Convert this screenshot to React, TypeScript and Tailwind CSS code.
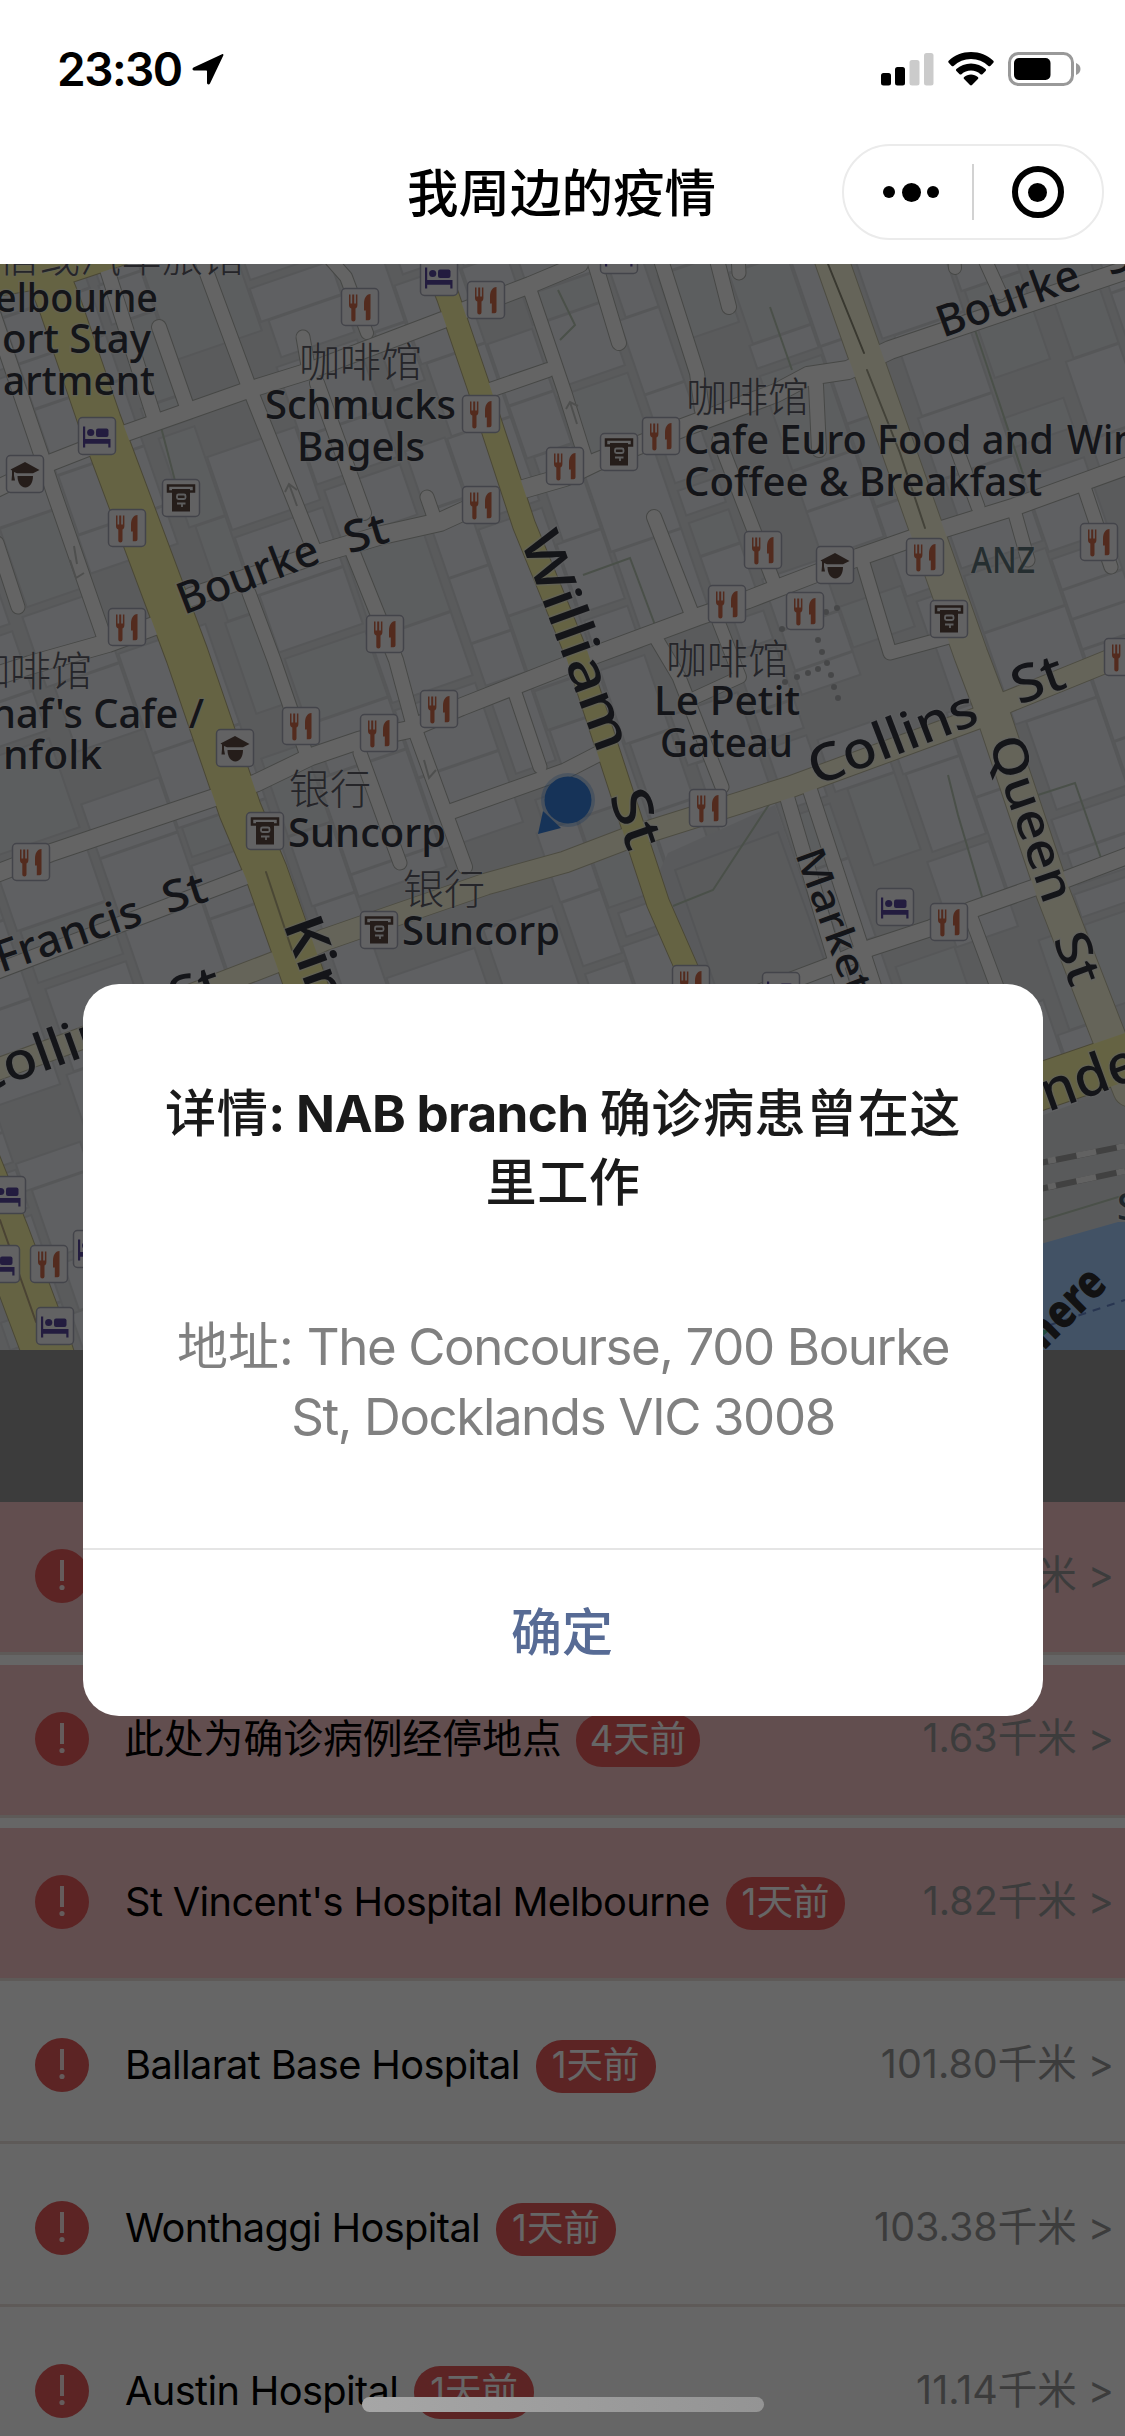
import React from "react";

type Pt = [number, number];
type Poi = { kind: "food" | "bed" | "grad" | "atm"; x: number; y: number };
type Label = {
  t: string;
  x: number;
  y: number;
  size: number;
  len?: number;
  rot?: number;
  fill?: string;
  weight?: number;
};

const lanes: { w: number; pts: Pt[] }[] = [
  { w: 16, pts: [[-10, 492], [52, 462], [126, 433], [248, 390], [306, 372], [443, 320]] },
  { w: 16, pts: [[462, 311], [530, 285], [580, 264]] },
  { w: 14, pts: [[490, 390], [548, 370]] },
  { w: 18, pts: [[191, 597], [321, 553], [382, 535], [440, 522], [475, 506]] },
  { w: 18, pts: [[520, 490], [565, 477], [596, 462], [682, 428], [776, 393], [808, 376], [848, 370], [890, 350], [1135, 267]] },
  { w: 18, pts: [[165, 622], [108, 643], [30, 665], [-10, 678]] },
  { w: 17, pts: [[-5, 874], [50, 853], [216, 797], [256, 783], [310, 757], [360, 740], [407, 730], [461, 707], [565, 666], [697, 617], [747, 600], [812, 575], [859, 557], [925, 534]] },
  { w: 17, pts: [[940, 530], [1014, 507], [1130, 465]] },
  { w: 15, pts: [[447, 813], [565, 771], [600, 753]] },
  { w: 16, pts: [[740, 1000], [827, 967], [870, 948], [931, 928], [971, 910], [1036, 887], [1064, 880], [1135, 853]] },
  { w: 15, pts: [[-5, 972], [245, 877]] },
  { w: 14, pts: [[-8, 310], [43, 460], [54, 493], [104, 637]] },
  { w: 14, pts: [[104, 260], [155, 420]] },
  { w: 14, pts: [[159, 327], [187, 407]] },
  { w: 14, pts: [[202, 260], [249, 387], [313, 547]] },
  { w: 13, pts: [[249, 593], [274, 660], [306, 753]] },
  { w: 12, pts: [[331, 260], [346, 277], [367, 333]] },
  { w: 13, pts: [[303, 337], [308, 366]] },
  { w: 14, pts: [[317, 383], [364, 513]] },
  { w: 14, pts: [[353, 553], [396, 660], [414, 727], [465, 867]] },
  { w: 13, pts: [[427, 497], [434, 517]] },
  { w: 13, pts: [[360, 753], [400, 863]] },
  { w: 13, pts: [[515, 693], [540, 767]] },
  { w: 13, pts: [[-3, 543], [18, 607]] },
  { w: 13, pts: [[530, 290], [565, 393], [586, 460]] },
  { w: 14, pts: [[594, 260], [619, 343]] },
  { w: 14, pts: [[661, 260], [697, 373], [702, 410]] },
  { w: 14, pts: [[717, 260], [729, 307]] },
  { w: 13, pts: [[738, 255], [739, 273]] },
  { w: 13, pts: [[719, 440], [773, 580]] },
  { w: 14, pts: [[654, 517], [693, 617]] },
  { w: 13, pts: [[863, 563], [890, 653], [949, 637]] },
  { w: 13, pts: [[956, 447], [978, 507]] },
  { w: 13, pts: [[985, 260], [1000, 293]] },
  { w: 12, pts: [[954, 255], [955, 268]] },
  { w: 13, pts: [[1014, 510], [1028, 560]] },
  { w: 13, pts: [[1084, 487], [1111, 567]] },
  { w: 14, pts: [[816, 385], [819, 450]] },
  { w: 13, pts: [[657, 640], [679, 677], [722, 787]] },
  { w: 12, pts: [[716, 615], [740, 677], [690, 700]] },
  { w: 14, pts: [[787, 797], [841, 980], [860, 1040]] },
  { w: 14, pts: [[810, 790], [873, 983], [890, 1040]] },
  { w: 13, pts: [[971, 917], [1000, 995]] },
];

const paleRoads: { w: number; pts: Pt[] }[] = [
  { w: 33, pts: [[828, 250], [833, 264], [926, 528], [971, 655], [990, 705], [1053, 893], [1110, 1040], [1130, 1090]] },
  { w: 21, pts: [[-10, 1072], [83, 1038], [216, 985], [281, 960], [324, 940], [396, 915], [486, 884], [565, 862], [628, 838], [790, 787], [978, 718], [1007, 702], [1135, 650]] },
];

const yellowRoads: { w: number; pts: Pt[] }[] = [
  { w: 38, pts: [[-10, 278], [60, 266], [120, 246]] },
  { w: 42, pts: [[38, 250], [60, 305], [100, 422], [187, 655], [240, 810], [266, 872], [304, 980], [325, 1040]] },
  { w: 22, pts: [[425, 240], [448, 297], [479, 388], [524, 525], [577, 655], [634, 830], [658, 903], [686, 967], [700, 1000]] },
  { w: 50, pts: [[-30, 1150], [4, 1235], [47, 1350], [55, 1375]] },
  { w: 46, pts: [[1030, 1090], [1135, 1054]] },
];

const pois: Poi[] = [
  { kind: "food", x: 360, y: 307 }, { kind: "food", x: 486, y: 300 }, { kind: "food", x: 481, y: 414 },
  { kind: "food", x: 565, y: 466 }, { kind: "food", x: 481, y: 505 }, { kind: "food", x: 127, y: 528 },
  { kind: "food", x: 127, y: 627 }, { kind: "food", x: 385, y: 634 }, { kind: "bed", x: 439, y: 277 },
  { kind: "bed", x: 97, y: 436 }, { kind: "grad", x: 25, y: 474 }, { kind: "atm", x: 181, y: 498 },
  { kind: "bed", x: 619, y: 255 }, { kind: "food", x: 661, y: 436 }, { kind: "atm", x: 619, y: 452 },
  { kind: "food", x: 763, y: 550 }, { kind: "grad", x: 835, y: 565 }, { kind: "food", x: 925, y: 557 },
  { kind: "food", x: 1099, y: 542 }, { kind: "food", x: 727, y: 604 }, { kind: "food", x: 805, y: 611 },
  { kind: "atm", x: 949, y: 619 }, { kind: "food", x: 1123, y: 657 }, { kind: "food", x: 301, y: 726 },
  { kind: "food", x: 379, y: 733 }, { kind: "food", x: 439, y: 709 }, { kind: "grad", x: 235, y: 748 },
  { kind: "atm", x: 265, y: 831 }, { kind: "food", x: 31, y: 862 }, { kind: "atm", x: 379, y: 930 },
  { kind: "food", x: 708, y: 808 }, { kind: "bed", x: 895, y: 907 }, { kind: "food", x: 949, y: 922 },
  { kind: "food", x: 691, y: 984 }, { kind: "bed", x: 781, y: 991 }, { kind: "bed", x: 7, y: 1195 },
  { kind: "bed", x: 1, y: 1264 }, { kind: "food", x: 49, y: 1264 }, { kind: "bed", x: 92, y: 1249 },
  { kind: "bed", x: 55, y: 1326 },
];

const cjk: Label[] = [
  { t: "宿或汽车旅馆", x: -2, y: 272, size: 41 },
  { t: "咖啡馆", x: 299, y: 377, size: 41 },
  { t: "咖啡馆", x: 686, y: 412, size: 41 },
  { t: "咖啡馆", x: 666, y: 674, size: 41 },
  { t: "咖啡馆", x: -31, y: 686, size: 41 },
  { t: "银行", x: 289, y: 804, size: 41 },
  { t: "银行", x: 403, y: 904, size: 41 },
];

const labels: Label[] = [
  { t: "elbourne", x: -5, y: 312, size: 39.5, len: 163 },
  { t: "ort Stay", x: 2, y: 353, size: 39.5, len: 149 },
  { t: "artment", x: 3, y: 395, size: 39.5, len: 152 },
  { t: "Schmucks", x: 265, y: 419, size: 39.5, len: 191 },
  { t: "Bagels", x: 297, y: 461, size: 39.5, len: 128 },
  { t: "Cafe Euro Food and", x: 684, y: 454, size: 39.5, len: 370 },
  { t: "Wine", x: 1067, y: 454, size: 39.5, len: 92 },
  { t: "Coffee & Breakfast", x: 684, y: 496, size: 39.5, len: 358 },
  { t: "ANZ", x: 971, y: 573, size: 36, len: 64, fill: "#5c7378" },
  { t: "Le Petit", x: 654, y: 715, size: 39.5, len: 146 },
  { t: "Gateau", x: 660, y: 757, size: 39.5, len: 133 },
  { t: "haf's Cafe /", x: -9, y: 728, size: 39.5, len: 213 },
  { t: "nfolk", x: 3, y: 769, size: 39.5, len: 99 },
  { t: "Suncorp", x: 288, y: 847, size: 39.5, len: 158 },
  { t: "Suncorp", x: 402, y: 945, size: 39.5, len: 158 },
  { t: "Bourke", x: 184, y: 615, size: 44, len: 148, rot: -21 },
  { t: "St", x: 349, y: 554, size: 44, len: 44, rot: -17 },
  { t: "Bourke", x: 943, y: 338, size: 44, len: 149, rot: -20 },
  { t: "St", x: 1110, y: 276, size: 44, len: 44, rot: -20 },
  { t: "William", x: 520, y: 539, size: 54, len: 230, rot: 70 },
  { t: "St", x: 609, y: 796, size: 54, len: 60, rot: 71 },
  { t: "Collins", x: 816, y: 786, size: 52, len: 177, rot: -21 },
  { t: "St", x: 1019, y: 705, size: 52, len: 53, rot: -20 },
  { t: "Queen", x: 988, y: 742, size: 48, len: 173, rot: 71 },
  { t: "St", x: 1053, y: 939, size: 48, len: 53, rot: 70 },
  { t: "Market", x: 795, y: 854, size: 40, len: 152, rot: 70 },
  { t: "King", x: 283, y: 924, size: 54, len: 126, rot: 70, weight: 600 },
  { t: "Francis", x: 1, y: 973, size: 44, len: 152, rot: -19 },
  { t: "St", x: 168, y: 914, size: 44, len: 44, rot: -18 },
  { t: "Collins", x: -24, y: 1096, size: 52, len: 177, rot: -20 },
  { t: "St", x: 177, y: 1016, size: 52, len: 52, rot: -20 },
  { t: "nders", x: 1048, y: 1112, size: 55, len: 152, rot: -20 },
  { t: "S", x: 1117, y: 1220, size: 38, fill: "#4a606c" },
];

const dots: Pt[] = [
  [837, 608], [826, 612], [782, 629], [818, 640], [822, 652], [827, 663], [818, 669], [808, 673],
  [797, 677], [785, 682], [831, 675], [834, 687], [838, 698],
];

const line = (pts: Pt[]) => pts.map((p) => p.join(",")).join(" ");

/* Deterministic parcels laid on the city grid, which runs about 19 degrees off the horizontal. */
function parcels() {
  const out: { x: number; y: number; w: number; h: number; tone: number }[] = [];
  let seed = 29;
  const rnd = () => {
    seed = (seed * 1103515245 + 12345) % 2147483648;
    return seed / 2147483648;
  };
  let x = -520;
  while (x < 1050) {
    const w = 44 + Math.floor(rnd() * 52);
    let y = 230 + rnd() * 30;
    while (y < 1750) {
      const h = 30 + Math.floor(rnd() * 78);
      if (rnd() > 0.14) {
        const inset = rnd() > 0.6 ? rnd() * 14 : 0;
        out.push({ x: x + inset, y, w: w - 2 - inset, h: h - (rnd() > 0.6 ? 8 : 1), tone: rnd() });
      }
      y += h;
    }
    x += w + (rnd() > 0.5 ? 7 : 0);
  }
  return out;
}

function PoiIcon({ kind, x, y }: Poi) {
  return (
    <g transform={`translate(${x - 19} ${y - 19})`}>
      <rect x="0.5" y="0.5" width="37" height="37" rx="4" fill="#f4f4f7" stroke="#a9abba" strokeWidth="1.5" />
      {kind === "food" && (
        <g fill="#d06c4c">
          <path d="M8 6.500h1.500v9h1.700v-9h2v9h1.700v-9h1.500v10.500c0 2-.7 2.800-1.900 3.400v11a1.900 1.900 0 0 1-4.200 0v-11c-1.500-.6-2.300-1.400-2.300-3.400z" />
          <path d="M29.500 6v24c0 1.500-.7 2.200-2 2.200h-2.700V22.500h-1.800v-7c0-5 2.200-9.500 6.500-9.500z" />
        </g>
      )}
      {kind === "bed" && (
        <g fill="#57489f">
          <path d="M5 9.500h2.200v12.500H32.500v8.500h-2.200v-3.800H7.200v3.800H5z" />
          <circle cx="12.700" cy="15.500" r="3.600" />
          <rect x="18" y="11.500" width="12.500" height="8.500" rx="2" />
        </g>
      )}
      {kind === "grad" && (
        <g fill="#5e4a42">
          <path d="M19 7l14.500 8-6.500 3.200H11l-3-1.200v3.500l1 5H5.500l.5-5.500v-4.500L4.500 14.500z" />
          <path d="M11.500 21h15.500c0 6.500-3 11.500-7.700 11.500s-7.800-5-7.800-11.500z" />
        </g>
      )}
      {kind === "atm" && (
        <g>
          <path d="M6 6.500h26v6H6z" fill="none" stroke="#5e4a42" strokeWidth="2.500" />
          <path d="M10 10h18v22.500H10z" fill="#5e4a42" />
          <rect x="15" y="15.500" width="8.500" height="4.500" rx="1.500" fill="none" stroke="#e8e8ea" strokeWidth="1.800" />
          <path d="M15 24.500h8.500M20 24.500v3.500" stroke="#e8e8ea" strokeWidth="1.800" />
        </g>
      )}
    </g>
  );
}

function MapText({ l, light }: { l: Label; light?: boolean }) {
  return (
    <text
      x={0}
      y={0}
      transform={`translate(${l.x} ${l.y}) rotate(${l.rot ?? 0})`}
      fontSize={l.size}
      fontWeight={l.weight ?? (light ? 300 : 460)}
      textLength={l.len}
      lengthAdjust="spacingAndGlyphs"
      fill={l.fill ?? (light ? "#5c5c66" : "#34363f")}
      stroke="#f0f2f5"
      strokeWidth={light ? 1.5 : 2.5}
      strokeOpacity={0.5}
      paintOrder="stroke"
    >
      {l.t}
    </text>
  );
}

function CityMap() {
  return (
    <svg viewBox="0 264 1125 1086" className="block h-[1086px] w-full shrink-0 font-['Noto_Sans','Noto_Sans_CJK_SC',sans-serif]">
      <rect x="0" y="264" width="1125" height="1086" fill="#e0e3e6" />
      <g transform="rotate(-19)">
        {parcels().map((p, i) => (
          <rect
            key={i}
            x={p.x}
            y={p.y}
            width={p.w}
            height={p.h}
            fill={p.tone > 0.25 ? "#edeff4" : "#e7eaed"}
            stroke="#d6d9dd"
            strokeWidth="2"
          />
        ))}
      </g>
      <polygon points="668,853 775,805 832,965 712,1000 655,880" fill="#dfe2e5" />
      <polygon points="675,870 778,832 826,965 720,1000" fill="#e0e3e5" stroke="#d2d5d9" strokeWidth="2" />
      <polygon points="1030,1120 1125,1085 1125,1225 1030,1250" fill="#dfe2e3" />
      <g fill="none" stroke="#b9c8b6" strokeWidth="2">
        <polyline points="770,803 713,890 673,906" />
        <polyline points="558,290 575,325 560,340" />
        <polyline points="770,307 792,370" />
        <polyline points="975,330 1025,480" />
        <polyline points="948,775 958,815 983,900" />
        <polyline points="1038,795 1075,783 1101,858" />
        <polyline points="583,575 630,558 655,625" />
        <polyline points="161,427 180,500" />
        <polyline points="1043,1220 1125,1195" />
      </g>
      <g fill="none" strokeLinejoin="round" strokeLinecap="round">
        {lanes.map((r, i) => (
          <polyline key={i} points={line(r.pts)} stroke="#b0b3ae" strokeWidth={r.w + 2} />
        ))}
        {paleRoads.map((r, i) => (
          <polyline key={i} points={line(r.pts)} stroke="#c0bea5" strokeWidth={r.w + 2} />
        ))}
        {yellowRoads.map((r, i) => (
          <polyline key={i} points={line(r.pts)} stroke="#b9b285" strokeWidth={r.w + 2} />
        ))}
        {lanes.map((r, i) => (
          <polyline key={i} points={line(r.pts)} stroke="#fafafa" strokeWidth={r.w} />
        ))}
        {paleRoads.map((r, i) => (
          <polyline key={i} points={line(r.pts)} stroke="#fdfbdf" strokeWidth={r.w} />
        ))}
        {yellowRoads.map((r, i) => (
          <polyline key={i} points={line(r.pts)} stroke="#fdf8a8" strokeWidth={r.w} />
        ))}
        <polyline points="828,264 864,353" stroke="#8f8d78" strokeWidth="2" />
        <polyline points="867,370 900,453 925,528" stroke="#a8a68f" strokeWidth="2" />
        <polyline points="266,872 292,950" stroke="#b9b285" strokeWidth="2" />
        <polyline points="0,1220 36,1322" stroke="#b9a880" strokeWidth="2" />
      </g>
      <g fill="none" stroke="#c4c6c4" strokeWidth="2">
        <path d="M285 492l4-8 8 6M289 484l8 22M70 560l6 18 8-5M74 546l3 18M566 409l4-7 8 4M570 402l7 22M424 760l5 18 7-8" />
      </g>
      <g fill="none" strokeWidth="6">
        <path d="M1040 1163 1125 1146M1040 1189 1125 1171" stroke="#a2a2a2" />
        <path d="M1048 1161 1125 1146M1048 1187 1125 1171" stroke="#f5f5f5" strokeDasharray="20 21" strokeDashoffset="12" />
      </g>
      <polygon points="1030,1247 1118,1222 1125,1222 1125,1350 1030,1350" fill="#a5cdfd" />
      <path d="M1050 1325 1125 1300" stroke="#6485c8" strokeWidth="2" strokeDasharray="8 7" />
      <path d="M1043 1330h7l-7 6z" fill="#4fb79b" />
      {dots.map(([x, y], i) => (
        <circle key={i} cx={x} cy={y} r="3" fill="#b0b2b5" />
      ))}
      {pois.map((p, i) => (
        <PoiIcon key={i} {...p} />
      ))}
      {cjk.map((l, i) => (
        <MapText key={i} l={l} light />
      ))}
      {labels.map((l, i) => (
        <MapText key={i} l={l} />
      ))}
      <text transform="translate(1044 1351) rotate(-45)" fontSize="47" fontWeight="900" textLength="92" lengthAdjust="spacingAndGlyphs" fill="#2e2e30">
        here
      </text>
      <circle cx="568" cy="800" r="27" fill="#3d86dd" opacity="0.3" />
      <path d="M538 834 543 811 561 828z" fill="#3880dc" />
      <circle cx="568" cy="800" r="23.500" fill="#3880dc" />
    </svg>
  );
}

function StatusBar() {
  return (
    <div className="flex h-[132px] items-start justify-between pt-[43px] pr-[43px] pl-[57px]">
      <div className="flex items-center gap-[10px]">
        <span className="text-[46px] leading-[52px] font-semibold tracking-[-1.5px] text-black">23:30</span>
        <svg viewBox="0 0 32 32" className="h-[32px] w-[32px]">
          <path d="M30 1.200 1.500 14.600c-1.600.8-1.200 2.900.5 2.900h12.300c.5 0 .7.2.7.7v11.600c0 1.900 2.200 2.200 3 .6L31.300 2.600C31.800 1.400 31 .7 30 1.200z" />
        </svg>
      </div>
      <div className="mt-[9px] flex items-start gap-[14px]">
        <svg viewBox="0 0 53 34" className="h-[34px] w-[53px]">
          <rect x="0" y="21" width="10" height="12.500" rx="2.500" />
          <rect x="14" y="15" width="10" height="18.500" rx="2.500" />
          <rect x="28.500" y="8" width="10" height="25.500" rx="2.500" fill="#cbcbcb" />
          <rect x="43" y="1" width="9.500" height="32.500" rx="2.500" fill="#cbcbcb" />
        </svg>
        <svg viewBox="0 0 46 34" className="h-[34px] w-[46px]">
          <path d="M23 0C14.300 0 6.500 3.300.7 8.800c-.6.6-.6 1.400 0 2l3 3.100c.5.500 1.300.500 1.900 0A25 25 0 0 1 23 6.900a25 25 0 0 1 17.400 7c.6.500 1.400.500 1.900 0l3-3.100c.6-.6.600-1.400 0-2C39.500 3.300 31.700 0 23 0z" />
          <path d="M23 11.400c-5.600 0-10.700 2.100-14.600 5.600-.6.6-.6 1.400 0 2l3.200 3.200c.5.500 1.300.5 1.900 0a14 14 0 0 1 19 0c.6.500 1.400.5 1.900 0l3.200-3.200c.6-.6.6-1.400 0-2-3.900-3.500-9-5.600-14.600-5.600z" />
          <path d="M23 22.500c-2.600 0-5 1-6.800 2.500-.7.600-.7 1.400-.1 2l5.900 6c.6.600 1.400.6 2 0l5.900-6c.6-.6.6-1.400-.1-2-1.800-1.500-4.200-2.500-6.800-2.500z" />
        </svg>
        <svg viewBox="0 0 74 34" className="h-[34px] w-[74px]">
          <rect x="1.500" y="1.500" width="63" height="31" rx="9" fill="none" stroke="#999" strokeWidth="3" />
          <rect x="6" y="6" width="36.500" height="22" rx="5" />
          <path d="M68 11c2.700 1 4.500 3.200 4.500 6s-1.800 5-4.500 6z" fill="#999" />
        </svg>
      </div>
    </div>
  );
}

function NavBar() {
  return (
    <div className="relative flex h-[132px] items-start justify-center">
      <h1 className="pt-[25px] pr-[2px] text-[51.500px] leading-[72px] font-medium text-black">我周边的疫情</h1>
      <div className="absolute top-[12px] right-[21px] flex h-[96px] w-[262px] items-center rounded-full border-2 border-[#ebebeb]">
        <div className="flex w-[128px] items-center justify-center gap-[6.500px] pl-[6px]">
          <span className="size-[12px] rounded-full bg-black" />
          <span className="size-[19px] rounded-full bg-black" />
          <span className="size-[12px] rounded-full bg-black" />
        </div>
        <span className="h-[56px] w-[1.500px] bg-[#d2d2d2]" />
        <div className="flex flex-1 items-center justify-center">
          <span className="flex size-[52px] items-center justify-center rounded-full border-[6.500px] border-black">
            <span className="size-[19px] rounded-full bg-black" />
          </span>
        </div>
      </div>
    </div>
  );
}

const rows = [
  { name: "此处为确诊病例经停地点", ago: "4天前", dist: "1.20千米", near: true, latin: false },
  { name: "此处为确诊病例经停地点", ago: "4天前", dist: "1.63千米", near: true, latin: false },
  { name: "St Vincent's Hospital Melbourne", ago: "1天前", dist: "1.82千米", near: true, latin: true },
  { name: "Ballarat Base Hospital", ago: "1天前", dist: "101.80千米", near: false, latin: true },
  { name: "Wonthaggi Hospital", ago: "1天前", dist: "103.38千米", near: false, latin: true },
  { name: "Austin Hospital", ago: "1天前", dist: "11.14千米", near: false, latin: true },
];

function CaseRow({ name, ago, dist, near, latin }: (typeof rows)[number]) {
  return (
    <li
      className={`mb-[10px] flex h-[153px] shrink-0 items-center border-b-[3px] border-[#ebe2dc] pr-[11px] pb-[2px] pl-[35px] ${
        near ? "bg-[#f5c3c6]" : "bg-white"
      }`}
    >
      <svg viewBox="0 0 54 54" className="size-[54px]">
        <circle cx="27" cy="27" r="27" fill="#e65a5a" />
        <rect x="25" y="11" width="4" height="21" fill="#fff" fillOpacity="0.85" />
        <circle cx="27" cy="38.5" r="2.6" fill="#fff" fillOpacity="0.85" />
      </svg>
      <span
        className={`text-[39.800px] leading-[56px] whitespace-nowrap text-black ${
          latin ? "mr-[16px] ml-[36px] tracking-[-0.65px]" : "mr-[14px] ml-[35px]"
        }`}
      >
        {name}
      </span>
      <span
        className={`mt-[2px] flex h-[53px] items-center rounded-[26px] bg-[#e65a5a] pb-[2px] text-[36.500px] whitespace-nowrap text-white ${
          latin ? "px-[16px]" : "px-[14px]"
        }`}
      >
        {ago}
      </span>
      <span className="ml-auto text-[39.500px] whitespace-nowrap text-[#979797]">{dist} &gt;</span>
    </li>
  );
}

function Dialog() {
  return (
    <div className="absolute top-[984px] left-[83px] flex h-[732px] w-[960px] flex-col overflow-hidden rounded-[36px] bg-white text-center">
      <h2 className="px-[60px] pt-[95px] text-[51.200px] leading-[69px] font-medium tracking-[0.4px] whitespace-nowrap text-[#1a1a1a]">
        详情<span className="font-bold tracking-[-0.7px]">: NAB branch </span>确诊病患曾在这
        <br />
        里工作
      </h2>
      <p className="px-[60px] pt-[95px] text-[51px] leading-[70px] tracking-[-1.400px] text-[#808080]">
        <span className="tracking-[0px]">地址:</span> The Concourse, 700 Bourke
        <br />
        St, Docklands VIC 3008
      </p>
      <button className="mt-auto h-[168px] w-full border-t-2 border-[#e5e5e5] pr-[2px] text-[51px] font-medium text-[#576b95]">
        确定
      </button>
    </div>
  );
}

export default function App() {
  return (
    <div className="relative flex h-[2436px] w-[1125px] flex-col overflow-hidden bg-white font-['Inter','Noto_Sans_CJK_SC',sans-serif]">
      <StatusBar />
      <NavBar />
      <main className="relative flex h-[2172px] flex-col overflow-hidden">
        <CityMap />
        <div className="h-[152px] shrink-0 bg-[#979797]" />
        <ul className="flex flex-col">
          {rows.map((r, i) => (
            <CaseRow key={i} {...r} />
          ))}
        </ul>
        <div className="absolute inset-0 bg-black/60" />
      </main>
      <Dialog />
      <div className="absolute bottom-[24px] left-[362px] h-[15px] w-[402px] rounded-full bg-linear-to-r from-[#a6a6a6] to-[#949494]" />
    </div>
  );
}
